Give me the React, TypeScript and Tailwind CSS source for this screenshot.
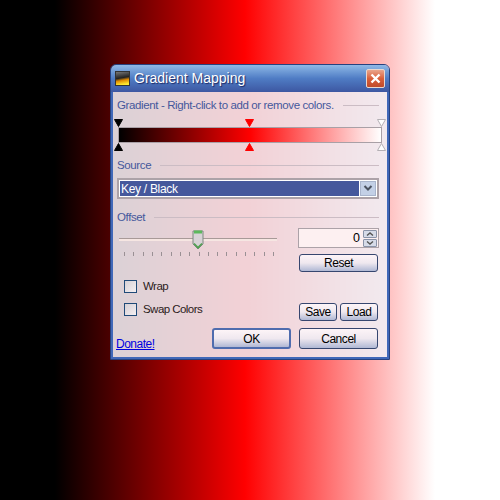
import React from "react";

const F = { fontFamily: '"Liberation Sans", Arial, sans-serif' };

function Tri({ color, down, stroke }: { color: string; down?: boolean; stroke?: string }) {
  return (
    <svg width="9" height="8" viewBox="0 0 9 8" className="block">
      <polygon points={down ? "0.5,0.5 8.5,0.5 4.5,7.5" : "4.5,0.5 8.5,7.5 0.5,7.5"} fill={color} stroke={stroke ?? color} strokeWidth="1" />
    </svg>
  );
}

function Group({ label }: { label: string }) {
  return (
    <div className="flex items-center gap-[9px] h-[14px] pr-[4px]">
      <span className="text-[11.5px] tracking-[-0.38px] leading-[14px] text-[#45589c] whitespace-nowrap">{label}</span>
      <div className="flex-1 h-px bg-[#cbbcc4]" />
    </div>
  );
}

function Btn({ children, w, h, primary }: { children: React.ReactNode; w: string; h: string; primary?: boolean }) {
  return (
    <div className={`${w} ${h} ${primary ? "border-2 border-[#4f6cae]" : "border border-[#36466f]"} rounded-[3px] bg-gradient-to-b from-[#fdf4f7] via-[#efe8ef] to-[#b0b8d4] flex items-center justify-center text-[12px] tracking-[-0.45px] text-black`}>
      {children}
    </div>
  );
}

function Check({ label }: { label: string }) {
  return (
    <div className="flex items-center gap-[6px] h-[13px]">
      <div className="w-[13px] h-[13px] border border-[#1f4a78] bg-gradient-to-br from-[#d6d0d5] to-[#f4f0f2]" />
      <span className="text-[11.5px] tracking-[-0.55px] leading-[13px] text-[#2a1a1a]">{label}</span>
    </div>
  );
}

const ticks = Array.from({ length: 17 });

export default function App() {
  return (
    <div className="w-[500px] h-[500px] pt-[64px] pl-[110px] bg-[linear-gradient(to_right,#000_11%,#f00_49%,#fff_87%)]" style={F}>
      <div className="w-[280px] h-[296px] rounded-t-[6px] border border-[#27427f] flex flex-col overflow-hidden">
        <div className="h-[27px] shrink-0 flex items-center px-[4px] bg-gradient-to-b from-[#8fb9e6] via-[#4f7cc4] to-[#3d57a2]">
          <div className="w-[15px] h-[15px] border border-[#333] bg-[linear-gradient(170deg,#777_0%,#222_45%,#e08a00_62%,#ffe930_90%)]" />
          <span className="ml-[4px] text-[14px] font-medium text-white [text-shadow:1px_1px_1px_#1d2a66]">Gradient Mapping</span>
          <div className="ml-auto w-[19px] h-[19px] rounded-[2px] border border-[#e8d8d0] bg-gradient-to-b from-[#e9a58c] via-[#d9603a] to-[#c04a2a] flex items-center justify-center">
            <svg width="11" height="11" viewBox="0 0 11 11"><path d="M1.5 1.5 L9.5 9.5 M9.5 1.5 L1.5 9.5" stroke="#fff" strokeWidth="2.4" /></svg>
          </div>
        </div>
        <div className="flex-1 border-x-2 border-b-2 border-[#4068b8] bg-[#f0f0f6]/87 px-[4px] flex flex-col">
          <div className="mt-[6px]"><Group label="Gradient - Right-click to add or remove colors." /></div>

          <div className="relative mt-[7px] h-[32px] mx-px">
            <div className="absolute left-[-4px] top-0"><Tri color="#000" down /></div>
            <div className="absolute left-[127px] top-0"><Tri color="#f00" down /></div>
            <div className="absolute left-[259px] top-0"><Tri color="#fff" down stroke="#b5b0b5" /></div>
            <div className="absolute left-[-4px] bottom-0"><Tri color="#000" /></div>
            <div className="absolute left-[127px] bottom-0"><Tri color="#f00" /></div>
            <div className="absolute left-[259px] bottom-0"><Tri color="#fff" stroke="#b5b0b5" /></div>
            <div className="absolute left-0 right-0 top-[8px] h-[16px] border border-[#a9a0a6] bg-[linear-gradient(to_right,#000,#f00_50%,#fff)]" />
          </div>

          <div className="mt-[7px]"><Group label="Source" /></div>

          <div className="mt-[6px] mr-[4px] h-[21px] border-2 border-[#aca2a8] bg-[#fff] flex items-stretch p-px">
            <div className="flex-1 bg-[#45589c] text-white text-[12px] tracking-[-0.3px] leading-[17px] pl-[1px]">Key / Black</div>
            <div className="w-[16px] ml-[1px] border border-[#a8b4cc] bg-[#c3d0e6] flex items-center justify-center">
              <svg width="10" height="7" viewBox="0 0 10 7"><path d="M1.5 1 L5 4.5 L8.5 1" fill="none" stroke="#4a5260" strokeWidth="2" /></svg>
            </div>
          </div>

          <div className="mt-[11px]"><Group label="Offset" /></div>

          <div className="mt-[4px] flex pr-[4px]">
            <div className="w-[158px] ml-[2px] flex flex-col">
              <div className="relative h-[22px]">
                <div className="absolute left-0 right-0 top-[10px] h-[3px] border-t border-[#a89a98] bg-[#f6e6e2]" />
                <div className="absolute left-[73px] top-[1px]">
                  <svg width="12" height="21" viewBox="0 0 12 21">
                    <path d="M1 2 H11 V15 L6 20 L1 15 Z" fill="#d8d2d6" stroke="#7d8a80" />
                    <path d="M2 1.5 H10 V4.5 H2 Z" fill="#5cb85c" />
                    <path d="M2 14.5 L6 18.5 L10 14.5" fill="none" stroke="#4fa04f" strokeWidth="1.6" />
                  </svg>
                </div>
              </div>
              <div className="mt-[2px] ml-[5px] w-[150px] flex justify-between">
                {ticks.map((_, i) => <div key={i} className="w-px h-[4px] bg-[#9a9094]" />)}
              </div>
            </div>
            <div className="ml-auto w-[81px] flex flex-col">
              <div className="h-[20px] border border-[#aca2a8] bg-[#fdf0f1] flex items-center justify-end">
                <span className="text-[12.5px] text-black mr-[3px]">0</span>
                <div className="w-[14px] mr-px flex flex-col gap-px">
                  <div className="h-[8px] border border-[#8a93a8] rounded-[1px] bg-[#d6dbe8] flex items-center justify-center"><svg width="8" height="4" viewBox="0 0 8 4"><path d="M1 3.5 L4 1 L7 3.5" fill="none" stroke="#555" strokeWidth="1.4" /></svg></div>
                  <div className="h-[8px] border border-[#8a93a8] rounded-[1px] bg-[#d6dbe8] flex items-center justify-center"><svg width="8" height="4" viewBox="0 0 8 4"><path d="M1 .5 L4 3 L7 .5" fill="none" stroke="#555" strokeWidth="1.4" /></svg></div>
                </div>
              </div>
              <div className="mt-[6px] ml-px"><Btn w="w-[79px]" h="h-[18px]">Reset</Btn></div>
            </div>
          </div>

          <div className="flex mt-[4px] pr-[5px]">
            <div className="ml-[7px] mt-[4px] flex flex-col gap-[10px]">
              <Check label="Wrap" />
              <Check label="Swap Colors" />
            </div>
            <div className="ml-auto mt-[27px] flex gap-[3px]">
              <Btn w="w-[38px]" h="h-[18px]">Save</Btn>
              <Btn w="w-[38px]" h="h-[18px]">Load</Btn>
            </div>
          </div>

          <div className="mt-[7px] flex items-end pr-[5px]">
            <span className="text-[12px] tracking-[-0.5px] leading-[14px] text-[#0000e0] underline -mb-[2px] -ml-px">Donate!</span>
            <div className="ml-auto flex gap-[8px]">
              <Btn w="w-[79px]" h="h-[21px]" primary>OK</Btn>
              <Btn w="w-[79px]" h="h-[21px]">Cancel</Btn>
            </div>
          </div>
        </div>
      </div>
    </div>
  );
}
